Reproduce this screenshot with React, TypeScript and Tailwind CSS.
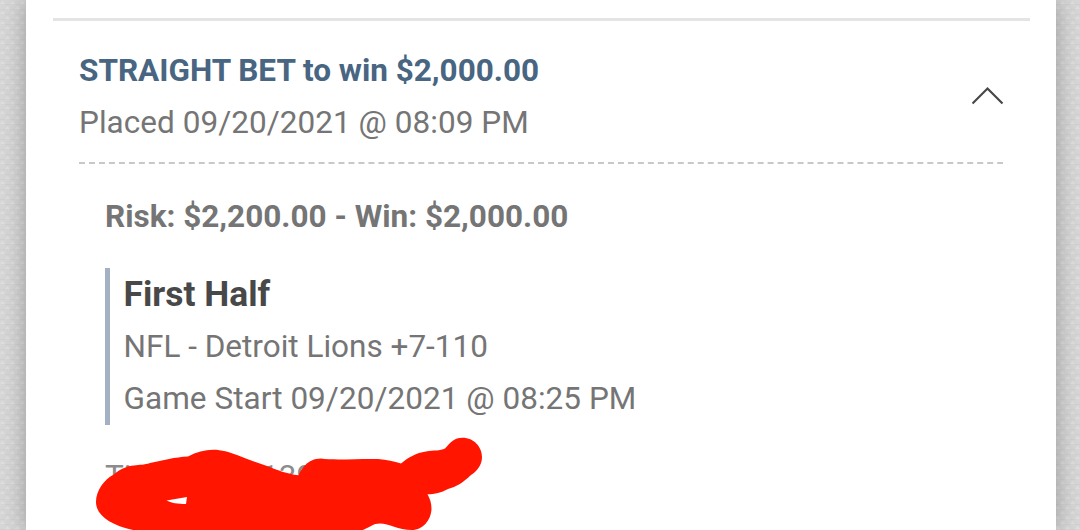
import React from 'react';

interface Wager {
  title: string;
  placed: string;
  risk: string;
  period: string;
  selection: string;
  gameStart: string;
}

const wager: Wager = {
  title: 'STRAIGHT BET to win $2,000.00',
  placed: 'Placed 09/20/2021 @ 08:09 PM',
  risk: 'Risk: $2,200.00 - Win: $2,000.00',
  period: 'First Half',
  selection: 'NFL - Detroit Lions +7-110',
  gameStart: 'Game Start 09/20/2021 @ 08:25 PM',
};

function Texture() {
  return (
    <svg className="absolute inset-0 h-full w-full" aria-hidden="true">
      <defs>
        <pattern id="weave" width="10" height="10" patternUnits="userSpaceOnUse">
          <path d="M0 4 L2.5 1 L5 4 Z M5 9 L7.5 6 L10 9 Z" fill="#dedede" />
          <path d="M5 4.5 H10 M0 9.5 H5" stroke="#d0d0d0" strokeWidth="1" />
        </pattern>
      </defs>
      <rect width="100%" height="100%" fill="url(#weave)" />
    </svg>
  );
}

function Scribble() {
  return (
    <svg
      className="absolute top-[430px] left-[64px] h-[100px] w-[440px]"
      viewBox="90 430 440 100"
      aria-hidden="true"
    >
      <path
        fillRule="evenodd"
        fill="#ff1500"
        d="M133 530 C110 525 96 515 96 502 C96 490 105 479 113 475 C120 469 127 466 134 465.500 C140 464.500 144 465 150 463 C163 460.500 175 457 188 456.500 C196 452 205 449.700 213 449.700 C222 449.700 229 452 237 455 C247 459 257 463 267 466 C277 470 287 474 298.500 475.300 C301 470 307 458.500 321 458.500 C334 460.500 360 458.500 378 459 C387 460 394 461 401 463.500 C409 457 416 453 426 451.500 C434 450 440 451 445 448.500 C451 442 454 437.700 462.500 437.700 C474 437.700 482 447 482 457 C482 465 477 471 471 475 C464 482 456 487 448 489 C441 493 435 494 427.500 494.300 C430 499 431.500 503 431.500 509 C431 520 423 530 412 530 C398 530 389 523.500 380 523.500 C373 523.500 370 527 363 530 Z M166.500 500.500 L187 497 L186 504 C178 504 171 503 166.500 500.500 Z"
      />
    </svg>
  );
}

export default function App() {
  return (
    <div className="relative h-[530px] w-[1080px] overflow-hidden bg-[#d6d6d6] pr-6 pl-[26px] font-[Roboto,sans-serif] text-[31.5px] leading-[52px] text-[#757575]">
      <Texture />
      <main className="relative h-full bg-white pt-[18px] pr-[26px] pl-[27px] shadow-[0_0_22px_rgba(0,0,0,0.3)]">
        <div className="h-[2.5px] bg-[#e4e4e4]" />

        <section className="px-[26px] pt-6">
          <header className="flex h-[117px] items-start justify-between">
            <div>
              <h2 className="font-bold whitespace-nowrap text-[#486581]">{wager.title}</h2>
              <p className="tracking-[0.04px] whitespace-nowrap">{wager.placed}</p>
            </div>
            <svg className="mt-[41px] h-5 w-8" viewBox="0 0 32 20" fill="none">
              <path d="M0.500 17.500 L15.500 2.500 L30.500 17.500" stroke="#484848" strokeWidth="2.2" />
            </svg>
          </header>
          <svg className="block h-0.5 w-full">
            <path d="M0 1 H924" stroke="#c8c8c8" strokeWidth="2" strokeDasharray="6 3.980" />
          </svg>

          <div className="px-[26px] pt-[27px]">
            <p className="font-bold whitespace-nowrap">{wager.risk}</p>
            <div className="mt-[25px] h-[157px] border-l-[5px] border-[#a3b1c2] pt-px pl-[13.5px]">
              <h3 className="mb-0.5 text-[35.4px] leading-[50px] font-bold text-[#484848]">{wager.period}</h3>
              <p>{wager.selection}</p>
              <p className="tracking-[0.04px]">{wager.gameStart}</p>
            </div>
            <p className="mt-[26px] flex text-[#8c8c8c]">
              <span className="w-[156px]">Ti</span>
              <span>139</span>
            </p>
          </div>
        </section>
        <Scribble />
      </main>
    </div>
  );
}
